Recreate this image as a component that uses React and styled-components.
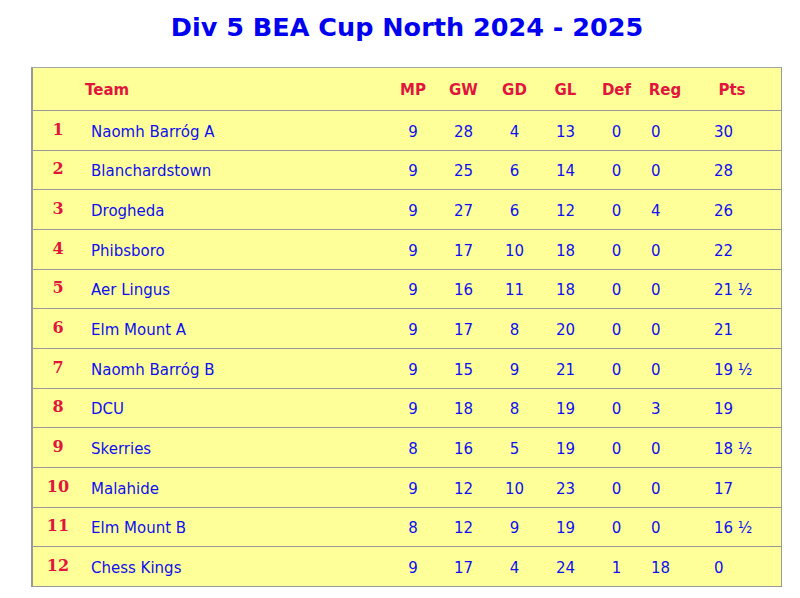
import React from "react";
import styled, { createGlobalStyle } from "styled-components";

const Global = createGlobalStyle`
  html, body { margin: 0; padding: 0; background: #ffffff; }
  body { font-family: "DejaVu Sans", Verdana, sans-serif; }
`;

const Page = styled.div`
  width: 800px;
  padding: 9px 0 0 31px;
  box-sizing: border-box;
`;

const Title = styled.h1`
  margin: 0 0 22px 0;
  width: 752px;
  text-align: center;
  font-family: "DejaVu Sans", Verdana, sans-serif;
  font-weight: bold;
  font-size: 25.5px;
  line-height: 36px;
  color: #0000f0;
`;

const Table = styled.div`
  width: 751px;
  box-sizing: border-box;
  background: #ffff99;
  border-top: 1px solid #a6a6a6;
  border-right: 1px solid #999999;
  border-bottom: 1px solid #999999;
  border-left: 2px solid #999999;
`;

const Row = styled.div`
  display: grid;
  grid-template-columns: 50px 305px 50px 51px 51px 51px 51px 46px 88px;
  align-items: center;
  height: ${(p) => (p.$head ? "42px" : "39.67px")};
  box-sizing: border-box;
  border-top: ${(p) => (p.$head ? "none" : "1px solid #999999")};
`;

const HeadCell = styled.div`
  font-weight: bold;
  font-size: 15px;
  color: #e0163c;
  text-align: ${(p) => (p.$left ? "left" : "center")};
  padding-left: ${(p) => (p.$left ? "2px" : "0")};
  padding-top: 2px;
`;

const Rank = styled.div`
  font-family: "DejaVu Serif", "Liberation Serif", serif;
  font-weight: bold;
  font-size: 16px;
  color: #e0163c;
  text-align: center;
  padding-bottom: 2px;
`;

const Cell = styled.div`
  font-size: 15px;
  color: #1010f0;
  text-align: ${(p) => (p.$left ? "left" : "center")};
  padding-left: ${(p) => p.$pad || "0"};
  padding-top: 3px;
  white-space: nowrap;
`;

const rows = [
  [1, "Naomh Barróg A", 9, 28, 4, 13, 0, 0, "30"],
  [2, "Blanchardstown", 9, 25, 6, 14, 0, 0, "28"],
  [3, "Drogheda", 9, 27, 6, 12, 0, 4, "26"],
  [4, "Phibsboro", 9, 17, 10, 18, 0, 0, "22"],
  [5, "Aer Lingus", 9, 16, 11, 18, 0, 0, "21 ½"],
  [6, "Elm Mount A", 9, 17, 8, 20, 0, 0, "21"],
  [7, "Naomh Barróg B", 9, 15, 9, 21, 0, 0, "19 ½"],
  [8, "DCU", 9, 18, 8, 19, 0, 3, "19"],
  [9, "Skerries", 8, 16, 5, 19, 0, 0, "18 ½"],
  [10, "Malahide", 9, 12, 10, 23, 0, 0, "17"],
  [11, "Elm Mount B", 8, 12, 9, 19, 0, 0, "16 ½"],
  [12, "Chess Kings", 9, 17, 4, 24, 1, 18, "0"],
];

export default function App() {
  return (
    <Page>
      <Global />
      <Title>Div 5 BEA Cup North 2024 - 2025</Title>
      <Table>
        <Row $head>
          <HeadCell />
          <HeadCell $left>Team</HeadCell>
          <HeadCell>MP</HeadCell>
          <HeadCell>GW</HeadCell>
          <HeadCell>GD</HeadCell>
          <HeadCell>GL</HeadCell>
          <HeadCell>Def</HeadCell>
          <HeadCell>Reg</HeadCell>
          <HeadCell>Pts</HeadCell>
        </Row>
        {rows.map((r) => (
          <Row key={r[0]}>
            <Rank>{r[0]}</Rank>
            <Cell $left $pad="8px">{r[1]}</Cell>
            <Cell>{r[2]}</Cell>
            <Cell>{r[3]}</Cell>
            <Cell>{r[4]}</Cell>
            <Cell>{r[5]}</Cell>
            <Cell>{r[6]}</Cell>
            <Cell $left $pad="9px">{r[7]}</Cell>
            <Cell $left $pad="26px">{r[8]}</Cell>
          </Row>
        ))}
      </Table>
    </Page>
  );
}
